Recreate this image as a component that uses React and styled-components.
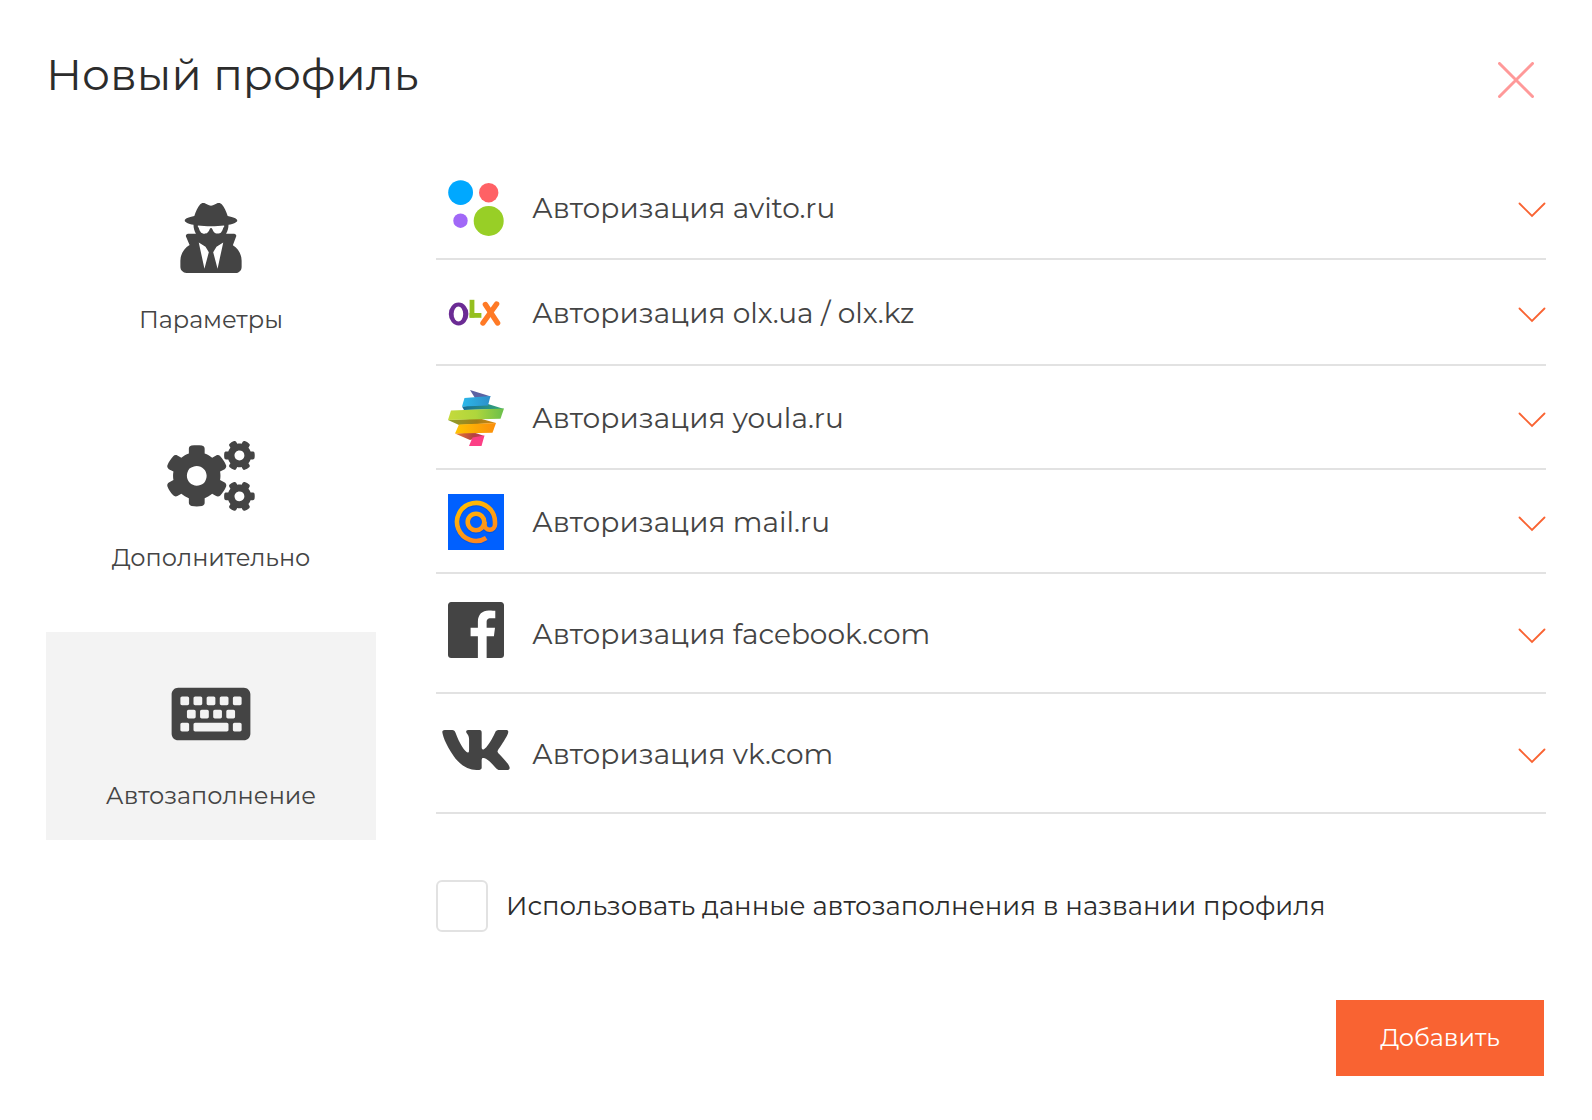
import React, { useState } from 'react';
import styled, { createGlobalStyle } from 'styled-components';
import { FaCogs, FaKeyboard, FaUserSecret, FaVk } from 'react-icons/fa';

const TABS = [
	{ id: 'params', title: 'Параметры', Icon: FaUserSecret, width: 62 },
	{ id: 'extra', title: 'Дополнительно', Icon: FaCogs, width: 88 },
	{ id: 'autofill', title: 'Автозаполнение', Icon: FaKeyboard, width: 80 }
];

export default function App() {
	const [tab, setTab] = useState('autofill');
	const [opened, setOpened] = useState(null);

	return (
		<Page>
			<GlobalStyle />
			<Header>
				<Title>Новый профиль</Title>
				<CloseButton type="button" aria-label="Закрыть">
					<svg width="36" height="36" viewBox="0 0 36 36">
						<path d="M1.500 1.500l33 33M34.500 1.500l-33 33" />
					</svg>
				</CloseButton>
			</Header>
			<Columns>
				<Tabs>
					{TABS.map(({ id, title, Icon, width }) => (
						<Tab key={id} type="button" $active={id === tab} $iconWidth={width} onClick={() => setTab(id)}>
							<Icon />
							<span>{title}</span>
						</Tab>
					))}
				</Tabs>
				<Content>
					<List>
						{SERVICES.map(({ id, host, Logo, height }) => (
							<li key={id}>
								<Service
									type="button"
									aria-expanded={opened === id}
									onClick={() => setOpened(opened === id ? null : id)}
								>
									<LogoCell $height={height}><Logo /></LogoCell>
									<ServiceName>Авторизация {host}</ServiceName>
									<Chevron />
								</Service>
							</li>
						))}
					</List>
					<CheckLabel>
						<Checkbox type="checkbox" />
						Использовать данные автозаполнения в названии профиля
					</CheckLabel>
				</Content>
			</Columns>
			<Footer>
				<SubmitButton type="button">Добавить</SubmitButton>
			</Footer>
		</Page>
	);
}

const Chevron = () => (
	<ChevronIcon width="28" height="20" viewBox="0 0 28 20">
		<path d="M1.500 5.500L14 18L26.500 5.500" />
	</ChevronIcon>
);

const AvitoLogo = () => (
	<svg width="56" height="56" viewBox="0 0 56 56">
		<circle cx="12.6" cy="12.6" r="12.4" fill="#00a8ff" />
		<circle cx="40.7" cy="12.7" r="9.7" fill="#ff6165" />
		<circle cx="12.5" cy="40.7" r="7.2" fill="#a168f7" />
		<circle cx="40.7" cy="40.9" r="15" fill="#98cf26" />
	</svg>
);

const OlxLogo = () => (
	<svg width="56" height="28" viewBox="0 0 56 28" fill="none" strokeLinecap="round">
		<ellipse cx="10.6" cy="15" rx="9.8" ry="11.4" fill="#6b2b94" />
		<ellipse cx="10.4" cy="15" rx="4.8" ry="7.4" fill="#fff" />
		<g stroke="#95bf20" strokeWidth="4.8" strokeLinecap="square">
			<line x1="24" y1="3.2" x2="24" y2="16.2" />
			<line x1="24" y1="16.4" x2="31" y2="16.4" />
		</g>
		<g stroke="#ff7a26" strokeWidth="5.4">
			<line x1="37.4" y1="5.6" x2="49.6" y2="24" />
			<line x1="48.6" y1="5" x2="35" y2="24" />
		</g>
	</svg>
);

const YoulaLogo = () => (
	<svg width="56" height="56" viewBox="0 0 56 56">
		<defs>
			<linearGradient id="youlaBlue"><stop offset="0" stopColor="#2cb8ea" /><stop offset="1" stopColor="#2d8fc9" /></linearGradient>
			<linearGradient id="youlaTeal"><stop offset="0" stopColor="#176a96" /><stop offset="1" stopColor="#35a878" /></linearGradient>
			<linearGradient id="youlaGreen"><stop offset="0" stopColor="#c5da3c" /><stop offset="0.5" stopColor="#afd63c" /><stop offset="1" stopColor="#6abf4b" /></linearGradient>
			<linearGradient id="youlaOlive"><stop offset="0" stopColor="#8fa02c" /><stop offset="0.6" stopColor="#a27d18" /><stop offset="1" stopColor="#d98c12" /></linearGradient>
			<linearGradient id="youlaOrange"><stop offset="0" stopColor="#ffc402" /><stop offset="1" stopColor="#fb8e0b" /></linearGradient>
			<linearGradient id="youlaRed"><stop offset="0" stopColor="#ec7a35" /><stop offset="0.6" stopColor="#b44440" /><stop offset="1" stopColor="#c93563" /></linearGradient>
		</defs>
		<polygon points="22,0 43,6.5 27,8" fill="#5b62a3" />
		<polygon points="14,16.5 40,14 56,19 16,20" fill="url(#youlaTeal)" />
		<polygon points="16.5,8 42.5,6 40,15.5 14,16.5" fill="url(#youlaBlue)" />
		<polygon points="0,30 32,28.5 48,33 11,35" fill="url(#youlaOlive)" />
		<polygon points="3,20.5 56,18.5 52.5,28.7 0,30" fill="url(#youlaGreen)" />
		<polygon points="7,43.5 26,42.5 36.5,46 22,50" fill="url(#youlaRed)" />
		<polygon points="11,34.5 48,33 44.5,42.7 7,43.5" fill="url(#youlaOrange)" />
		<polygon points="24.5,47.5 36.5,45.5 33.5,56 21,56" fill="#fc3f85" />
	</svg>
);

const MailLogo = () => (
	<svg width="56" height="56" viewBox="0 0 56 56">
		<defs>
			<linearGradient id="mailSign" gradientUnits="userSpaceOnUse" x1="14" y1="8" x2="34" y2="48">
				<stop offset="0" stopColor="#ffc000" />
				<stop offset="1" stopColor="#ff8420" />
			</linearGradient>
		</defs>
		<rect width="56" height="56" fill="#0060ff" />
		<g fill="none" stroke="#0049c9" strokeOpacity="0.5" strokeWidth="4.8" transform="translate(0 1)">
			<circle cx="28" cy="28" r="8.3" />
			<path d="M38.200 44A19 19 0 1 1 47 28v2.500a5.200 5.200 0 0 1-10.500 0V28" />
		</g>
		<g fill="none" stroke="url(#mailSign)" strokeWidth="4.6">
			<circle cx="28" cy="28" r="8.3" />
			<path d="M38.200 44A19 19 0 1 1 47 28v2.500a5.200 5.200 0 0 1-10.500 0V28" />
		</g>
	</svg>
);

const FacebookLogo = () => (
	<svg width="56" height="64" viewBox="0 0 448 512" fill="currentColor">
		<path d="M448 56.700v398.500c0 13.700-11.100 24.700-24.700 24.700H309.100V306.500h58.200l8.700-67.600h-67v-43.200c0-19.600 5.400-32.900 33.500-32.900h35.800v-60.500c-6.200-.8-27.400-2.700-52.200-2.700-51.600 0-87 31.500-87 89.400v49.900h-58.400v67.600h58.400V480H24.700C11.100 480 0 468.900 0 455.300V56.700C0 43.100 11.100 32 24.700 32h398.500c13.700 0 24.800 11.100 24.800 24.700z" />
	</svg>
);

const VkLogo = styled(FaVk)`
width: 72px;
height: 64px;
`;

const SERVICES = [
	{ id: 'avito', host: 'avito.ru', Logo: AvitoLogo, height: 56 },
	{ id: 'olx', host: 'olx.ua / olx.kz', Logo: OlxLogo, height: 58 },
	{ id: 'youla', host: 'youla.ru', Logo: YoulaLogo, height: 56 },
	{ id: 'mail', host: 'mail.ru', Logo: MailLogo, height: 56 },
	{ id: 'facebook', host: 'facebook.com', Logo: FacebookLogo, height: 72 },
	{ id: 'vk', host: 'vk.com', Logo: VkLogo, height: 72 }
];

const GlobalStyle = createGlobalStyle`
* { box-sizing: border-box; }
body {
	margin: 0;
	background: #fff;
	color: #444;
	font-family: Montserrat, Inter, sans-serif;
	font-weight: 400;
}
button {
	border: 0;
	padding: 0;
	background: none;
	color: inherit;
	font: inherit;
	cursor: pointer;
}
`;

const Page = styled.main`
padding: 44px 46px;
`;

const Header = styled.header`
display: flex;
justify-content: space-between;
align-items: flex-end;
padding-right: 6px;
`;

const Title = styled.h1`
margin: 0;
color: #2c2c2c;
font-size: 44px;
font-weight: 400;
line-height: 60px;
`;

const CloseButton = styled.button`
display: flex;
padding: 6px;
svg {
	fill: none;
	stroke: #ff9999;
	stroke-width: 3;
	stroke-linecap: round;
}
`;

const Columns = styled.div`
display: flex;
align-items: flex-start;
gap: 60px;
margin-top: 52px;
`;

const Tabs = styled.nav`
display: flex;
flex: 0 0 330px;
flex-direction: column;
gap: 30px;
`;

const Tab = styled.button`
display: flex;
flex-direction: column;
align-items: center;
gap: 31px;
padding: 47px 0 28px;
background: ${props => (props.$active ? '#f3f3f3' : 'transparent')};
font-size: 24px;
line-height: 32px;
svg {
	width: ${props => props.$iconWidth}px;
	height: 70px;
}
`;

const Content = styled.section`
flex: 1;
min-width: 0;
`;

const List = styled.ul`
margin: 0;
padding: 0;
list-style: none;
`;

const Service = styled.button`
display: flex;
align-items: center;
width: 100%;
padding: 24px 0 22px 4px;
border-bottom: 2px solid #e2e2e2;
font-size: 28px;
line-height: 36px;
text-align: left;
`;

const LogoCell = styled.span`
display: flex;
flex: 0 0 72px;
justify-content: center;
align-items: ${props => (props.$height > 64 ? 'flex-start' : 'center')};
height: ${props => props.$height}px;
margin-right: 20px;
svg {
	flex: none;
}
`;

const ServiceName = styled.span`
flex: 1;
`;

const ChevronIcon = styled.svg`
fill: none;
stroke: #f96332;
stroke-width: 1.8;
stroke-linecap: round;
`;

const CheckLabel = styled.label`
display: flex;
align-items: center;
gap: 18px;
margin-top: 66px;
color: #2c2c2c;
font-size: 26px;
line-height: 36px;
`;

const Checkbox = styled.input`
flex: none;
appearance: none;
width: 52px;
height: 52px;
margin: 0;
border: 2px solid #e2e2e2;
border-radius: 6px;
background: #fff;
&:checked {
	background: #f96332;
}
`;

const Footer = styled.footer`
display: flex;
justify-content: flex-end;
margin-top: 68px;
padding-right: 2px;
`;

const SubmitButton = styled.button`
min-width: 208px;
padding: 22px 40px;
background: #f96332;
color: #fff;
font-size: 24px;
line-height: 32px;
`;
